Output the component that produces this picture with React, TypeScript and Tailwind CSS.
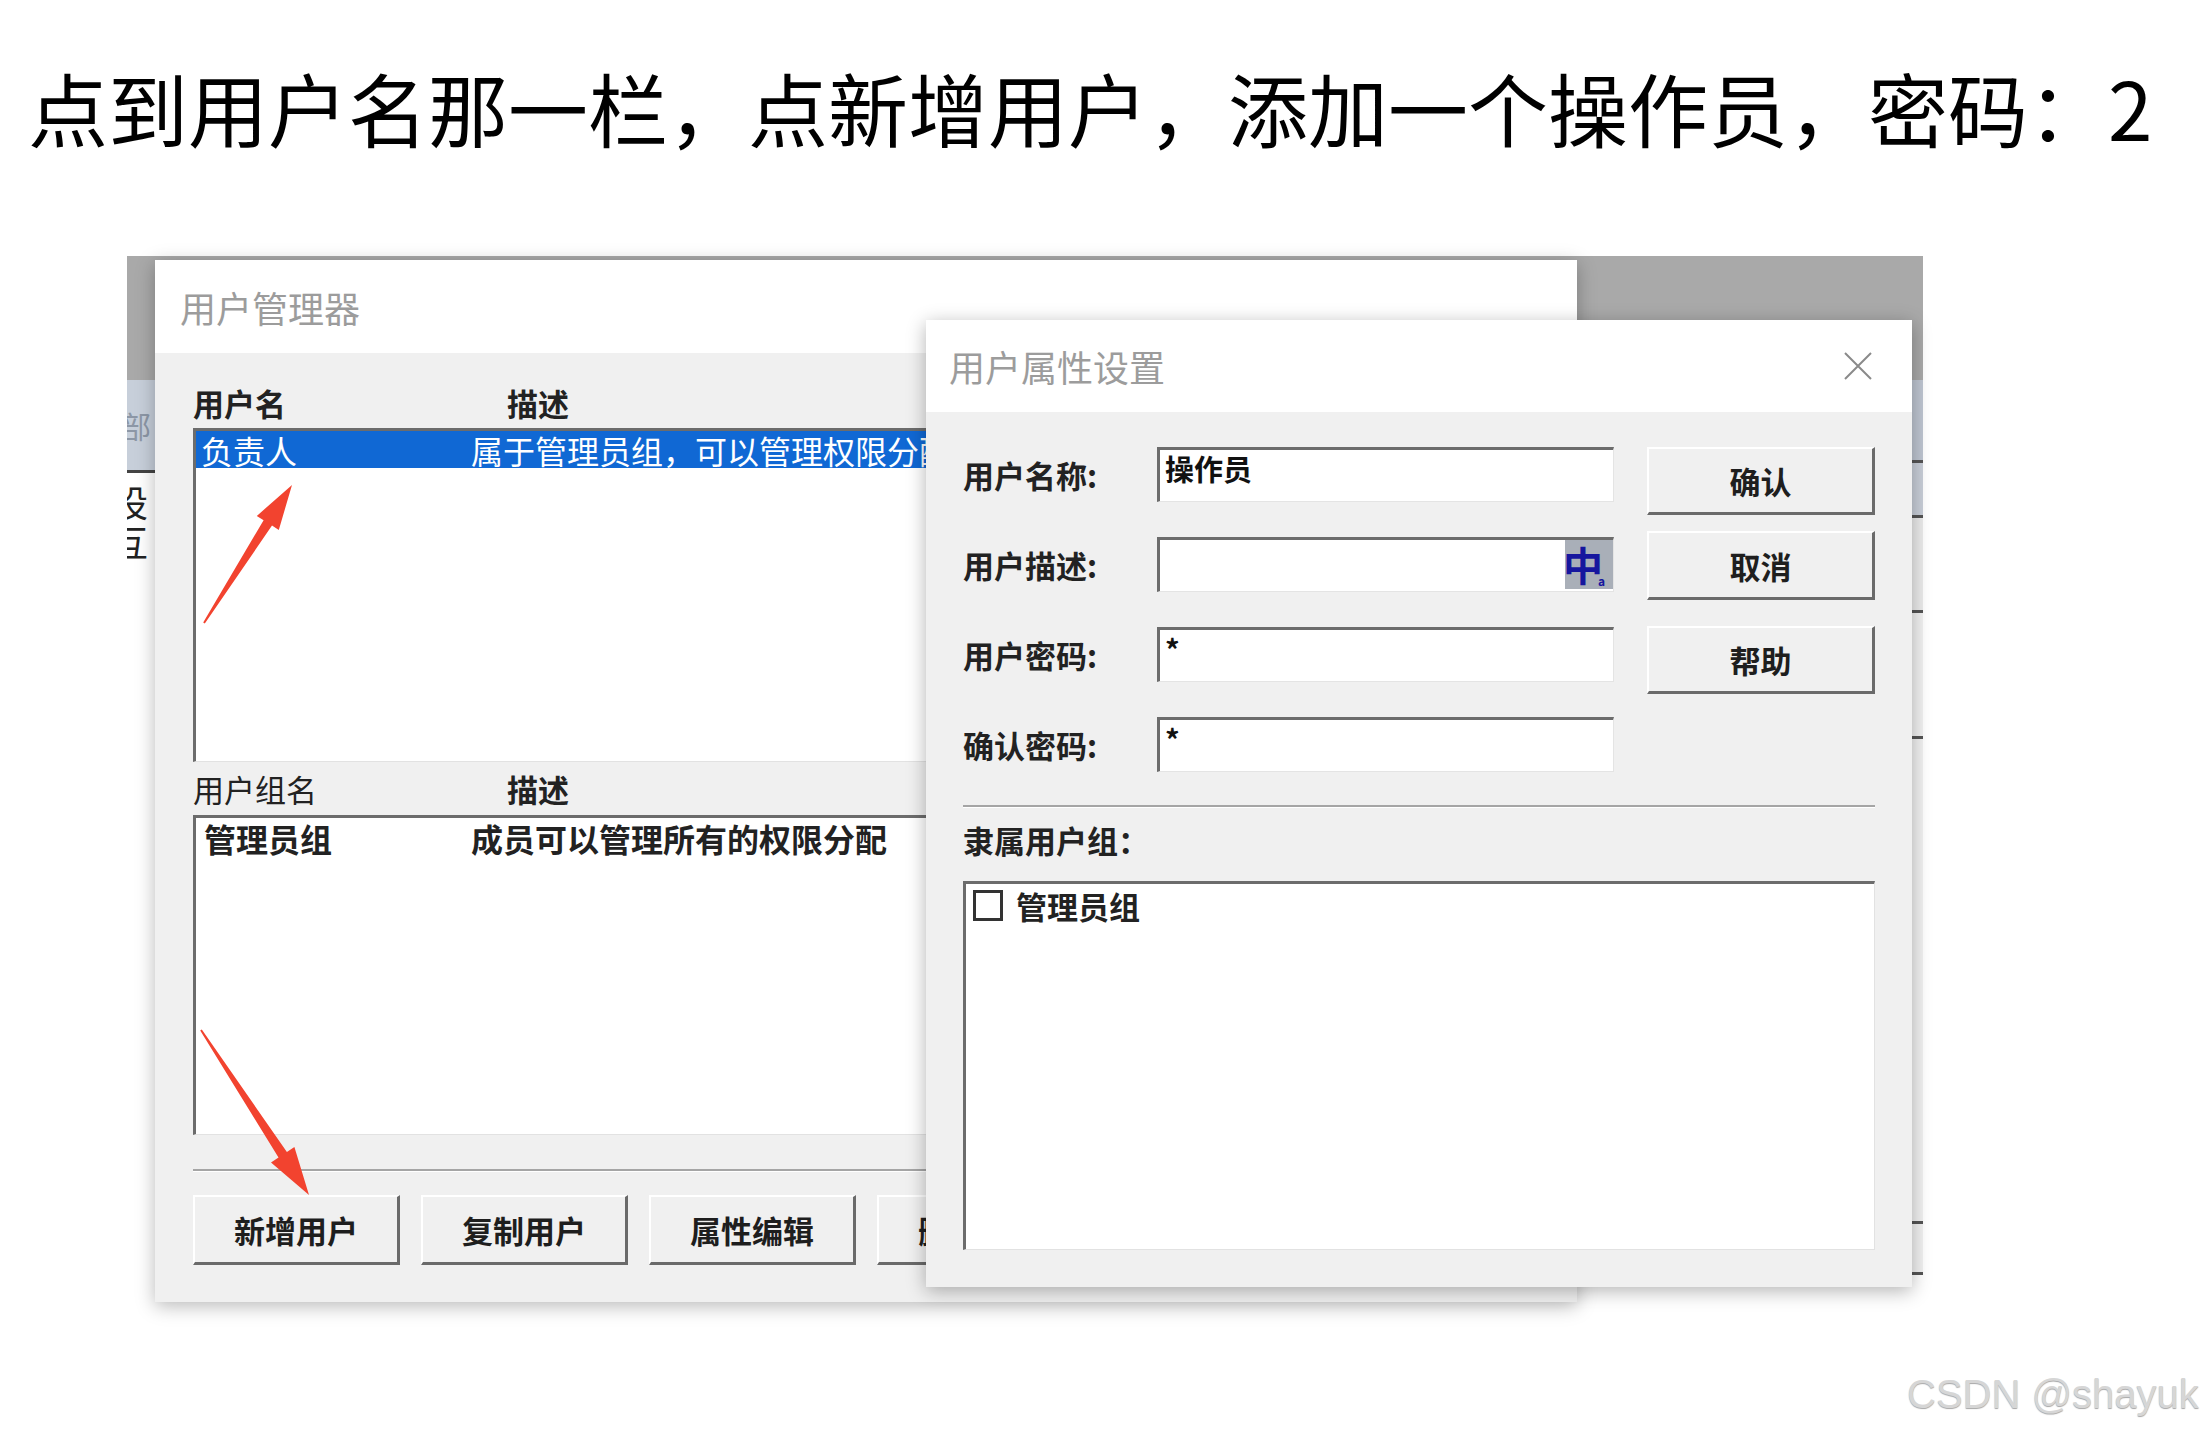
import React from 'react';

const cjk = "font-['Noto_Sans_CJK_SC','Noto_Sans',sans-serif]";

const Win95Button = ({ label, className = '' }: { label: string; className?: string }) => (
    <div
        className={`flex items-center justify-center bg-[#f0f0f0] border-t-2 border-l-2 border-t-white border-l-white border-r-[3px] border-b-[3px] border-r-[#6a6a6a] border-b-[#6a6a6a] text-[31px] font-bold text-[#1e1e1e] leading-none shrink-0 ${className}`}
    >
        {label}
    </div>
);

const Field = ({ label, value, ime }: { label: string; value?: string; ime?: boolean }) => (
    <div className="flex items-center h-[55px]">
        <div className="w-[194px] text-[31px] font-bold text-[#222] leading-none">{label}</div>
        <div className="relative w-[457px] h-[55px] bg-white border-t-[3px] border-l-[3px] border-t-[#6c6c6c] border-l-[#6c6c6c] border-r border-b border-r-[#e4e4e4] border-b-[#e4e4e4]">
            {value && (
                <div className="pl-[5px] pt-[4px] text-[29px] font-bold leading-none text-[#111]">{value}</div>
            )}
            {ime && (
                <div className="absolute right-0 top-0 w-[48px] h-[49px] bg-[#a9afb8] flex items-end">
                    <span className="text-[40px] font-bold leading-none text-[#16169e] -ml-[2px] mb-[5px]">中</span>
                    <span className="text-[12px] font-bold leading-none text-[#16169e] -ml-[5px] mb-[2px]">a</span>
                </div>
            )}
        </div>
    </div>
);

const App = () => {
    return (
        <div className={`relative w-[2204px] h-[1429px] bg-white overflow-hidden ${cjk}`}>
            {/* heading */}
            <div className="h-[256px] pl-[28px] pt-[66px] text-[80px] leading-none text-black whitespace-nowrap">
                点到用户名那一栏，点新增用户，添加一个操作员，密码：2
            </div>

            {/* screenshot canvas */}
            <div className="relative ml-[127px] w-[1796px] h-[1050px]">
                {/* background app window */}
                <div className="absolute left-0 top-0 w-[1796px] flex flex-col">
                    <div className="h-[124px] bg-[#a9a9a9]" />
                    <div className="flex justify-between">
                        <div className="w-[28px] flex flex-col">
                            <div className="h-[90px] bg-[#c7cfda] overflow-hidden flex items-center">
                                <span className="text-[30px] text-[#8d97a6] -ml-[6px] leading-none">部</span>
                            </div>
                            <div className="h-[3px] bg-[#444]" />
                            <div className="h-[95px] bg-white overflow-hidden flex flex-col pt-[10px] gap-[4px]">
                                <span className="text-[36px] text-[#222] -ml-[15px] leading-none">设</span>
                                <span className="text-[36px] text-[#222] -ml-[15px] leading-none">互</span>
                            </div>
                        </div>
                        <div className="w-[11px] flex flex-col">
                            <div className="h-[80px] bg-[#bfc6d2]" />
                            <div className="h-[3px] bg-[#555]" />
                            <div className="h-[52px] bg-[#c9cfd9]" />
                            <div className="h-[3px] bg-[#555]" />
                            <div className="h-[92px] bg-[#ececec]" />
                            <div className="h-[3px] bg-[#555]" />
                            <div className="h-[123px] bg-[#f2f2f2]" />
                            <div className="h-[3px] bg-[#555]" />
                            <div className="h-[482px] bg-[#f2f2f2]" />
                            <div className="h-[3px] bg-[#555]" />
                            <div className="h-[48px] bg-[#f2f2f2]" />
                            <div className="h-[3px] bg-[#555]" />
                        </div>
                    </div>
                </div>

                {/* 用户管理器 */}
                <div className="absolute left-[28px] top-[4px] w-[1422px] h-[1042px] flex flex-col bg-[#f0f0f0] shadow-[0_4px_18px_rgba(0,0,0,0.28)]">
                    <div className="h-[93px] bg-white flex items-center pl-[25px] text-[36px] text-[#9c9c9c] leading-none">
                        用户管理器
                    </div>
                    <div className="flex-1 flex flex-col px-[38px] pt-[24px]">
                        <div className="h-[51px] flex items-center text-[31px] font-bold text-[#222] leading-none">
                            <span className="w-[314px]">用户名</span>
                            <span>描述</span>
                        </div>
                        <div className="h-[334px] bg-white border-t-[3px] border-l-[3px] border-t-[#6c6c6c] border-l-[#6c6c6c] border-r border-b border-r-[#e2e2e2] border-b-[#e2e2e2]">
                            <div className="h-[37px] bg-[#1068d4] flex items-center text-[32px] text-white leading-none whitespace-nowrap overflow-hidden">
                                <span className="w-[275px] pl-[5px] shrink-0">负责人</span>
                                <span>属于管理员组，可以管理权限分配</span>
                            </div>
                        </div>
                        <div className="h-[53px] flex items-center text-[31px] text-[#222] leading-none">
                            <span className="w-[314px]">用户组名</span>
                            <span className="font-bold">描述</span>
                        </div>
                        <div className="h-[320px] bg-white border-t-[3px] border-l-[3px] border-t-[#6c6c6c] border-l-[#6c6c6c] border-r border-b border-r-[#e2e2e2] border-b-[#e2e2e2]">
                            <div className="h-[40px] flex items-center text-[32px] font-bold text-[#222] leading-none whitespace-nowrap">
                                <span className="w-[275px] pl-[8px] shrink-0">管理员组</span>
                                <span>成员可以管理所有的权限分配</span>
                            </div>
                        </div>
                        <div className="mt-[34px] h-[3px] border-t-2 border-t-[#a5a5a5] border-b border-b-white" />
                        <div className="mt-[23px] flex gap-[21px]">
                            <Win95Button label="新增用户" className="w-[207px] h-[70px]" />
                            <Win95Button label="复制用户" className="w-[207px] h-[70px]" />
                            <Win95Button label="属性编辑" className="w-[207px] h-[70px]" />
                            <Win95Button label="删除用户" className="w-[207px] h-[70px]" />
                            <Win95Button label="关闭" className="w-[207px] h-[70px]" />
                        </div>
                    </div>
                </div>

                {/* 用户属性设置 */}
                <div className="absolute left-[799px] top-[64px] w-[986px] h-[967px] flex flex-col bg-[#f0f0f0] shadow-[0_4px_18px_rgba(0,0,0,0.3)]">
                    <div className="h-[92px] bg-white flex items-center justify-between pl-[23px] pr-[39px]">
                        <span className="text-[36px] text-[#9c9c9c] leading-none">用户属性设置</span>
                        <svg width="30" height="30" viewBox="0 0 30 30">
                            <path d="M2 2 L28 28 M28 2 L2 28" stroke="#8a8a8a" strokeWidth="2" fill="none" />
                        </svg>
                    </div>
                    <div className="flex-1 flex flex-col px-[37px] pt-[35px]">
                        <div className="flex">
                            <div className="flex flex-col gap-[35px]">
                                <Field label="用户名称:" value="操作员" />
                                <Field label="用户描述:" ime />
                                <Field label="用户密码:" value="*" />
                                <Field label="确认密码:" value="*" />
                            </div>
                            <div className="ml-[33px] flex flex-col">
                                <Win95Button label="确认" className="w-[228px] h-[68px]" />
                                <Win95Button label="取消" className="w-[228px] h-[69px] mt-[16px]" />
                                <Win95Button label="帮助" className="w-[228px] h-[68px] mt-[26px]" />
                            </div>
                        </div>
                        <div className="mt-[33px] h-[3px] border-t-2 border-t-[#a5a5a5] border-b border-b-white" />
                        <div className="mt-[11px] h-[40px] flex items-center text-[31px] font-bold text-[#222] leading-none">
                            隶属用户组：
                        </div>
                        <div className="mt-[22px] h-[369px] bg-white border-t-[3px] border-l-[3px] border-t-[#6c6c6c] border-l-[#6c6c6c] border-r border-b border-r-[#e2e2e2] border-b-[#e2e2e2] pl-[7px] pt-[6px]">
                            <div className="flex items-center">
                                <div className="w-[30px] h-[31px] border-[3px] border-[#333] bg-white" />
                                <span className="ml-[13px] text-[31px] font-bold text-[#222] leading-none">管理员组</span>
                            </div>
                        </div>
                    </div>
                </div>
            </div>

            {/* red arrows */}
            <svg className="absolute left-0 top-0 pointer-events-none" width="2204" height="1429">
                <polygon
                    points="204.8,623.5 272,525.6 278.8,529.9 292,485 256.8,515.9 263.6,520.2 203.2,622.5"
                    fill="#f2432f"
                />
                <polygon
                    points="201.8,1029.5 286.9,1152.1 294.4,1147.1 309,1195 271,1162.5 278.5,1157.5 200.2,1030.5"
                    fill="#f2432f"
                />
            </svg>

            {/* watermark */}
            <div className="absolute left-[1907px] top-[1374px] text-[40px] leading-none text-[#d6d6d6] font-['Liberation_Sans',Arial,sans-serif] whitespace-nowrap [text-shadow:0_1px_1px_rgba(0,0,0,0.35)]">
                CSDN @shayuk
            </div>
        </div>
    );
};

export default App;
